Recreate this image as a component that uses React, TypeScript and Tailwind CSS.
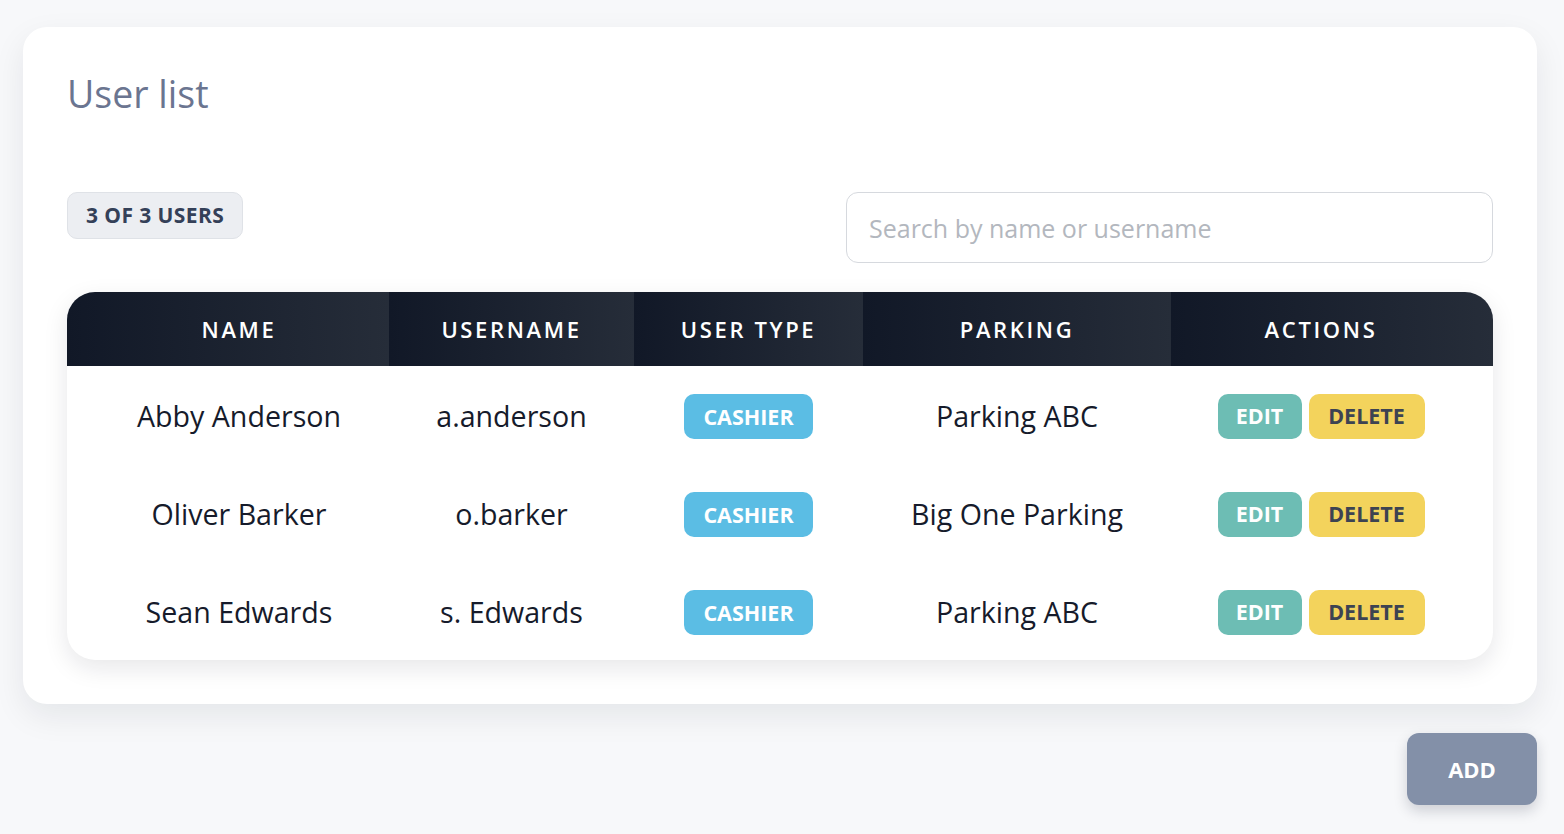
const users = [
  { name: "Abby Anderson", username: "a.anderson", type: "CASHIER", parking: "Parking ABC" },
  { name: "Oliver Barker", username: "o.barker", type: "CASHIER", parking: "Big One Parking" },
  { name: "Sean Edwards", username: "s. Edwards", type: "CASHIER", parking: "Parking ABC" },
];

const columns = [
  { label: "NAME", cls: "w-[322px] pl-[22px]" },
  { label: "USERNAME", cls: "w-[245px]" },
  { label: "USER TYPE", cls: "w-[229px]" },
  { label: "PARKING", cls: "w-[308px]" },
  { label: "ACTIONS", cls: "w-[322px] pr-[22px]" },
];

const App = () => {
  return (
    <div className="min-h-screen bg-[#f7f8fa] pt-[27px] pl-[23px] pr-[27px] pb-6 font-['Open_Sans',sans-serif]">
      {/* Card */}
      <div className="bg-white rounded-[24px] p-11 shadow-[0_12px_32px_rgba(15,23,42,0.08)]">
        <h1 className="text-[37.5px] leading-[46px] text-[#6b7590] font-normal">User list</h1>

        <div className="mt-[75px] flex items-start justify-between">
          <span className="inline-flex items-center h-[47px] px-[18px] rounded-[10px] bg-[#eceef2] border border-[#dfe2e7] text-[21px] font-bold text-[#344058] tracking-[0.02em]">
            3 OF 3 USERS
          </span>
          <input
            type="text"
            placeholder="Search by name or username"
            className="w-[647px] h-[71px] rounded-[12px] border border-[#d6d9de] px-[22px] text-[25px] text-[#111827] placeholder:text-[#b3b7be] outline-none"
          />
        </div>

        {/* Table */}
        <div className="mt-[29px] rounded-[28px] overflow-hidden bg-white shadow-[0_8px_24px_rgba(15,23,42,0.10)]">
          <table className="w-full border-collapse table-fixed">
            <thead>
              <tr className="h-[74px]">
                {columns.map((c) => (
                  <th
                    key={c.label}
                    className={`${c.cls} bg-gradient-to-r from-[#111827] to-[#262d39] text-white text-[22px] font-semibold tracking-[0.12em]`}
                  >
                    {c.label}
                  </th>
                ))}
              </tr>
            </thead>
            <tbody>
              {users.map((u) => (
                <tr key={u.username} className="h-[98px] text-[28.6px] text-[#161b2b]">
                  <td className="text-center pl-[22px] pt-[2px]">{u.name}</td>
                  <td className="text-center pt-[2px]">{u.username}</td>
                  <td className="text-center pt-[2px]">
                    <span className="inline-flex items-center justify-center w-[129px] h-[45px] rounded-[10px] bg-[#5bbde4] text-white text-[21.5px] font-bold">
                      {u.type}
                    </span>
                  </td>
                  <td className="text-center pt-[2px]">{u.parking}</td>
                  <td className="text-center pr-[22px] pt-[2px]">
                    <div className="flex justify-center gap-[7px]">
                      <button className="w-[84px] h-[45px] rounded-[10px] bg-[#6dbdb4] text-white text-[21.5px] font-bold">
                        EDIT
                      </button>
                      <button className="w-[116px] h-[45px] rounded-[10px] bg-[#f3d35c] text-[#3d4352] text-[21.5px] font-bold">
                        DELETE
                      </button>
                    </div>
                  </td>
                </tr>
              ))}
            </tbody>
          </table>
        </div>
      </div>

      <div className="mt-[29px] flex justify-end">
        <button className="w-[130px] h-[72px] rounded-[12px] bg-[#8390a8] text-white text-[22px] font-bold shadow-[0_6px_14px_rgba(15,23,42,0.18)]">
          ADD
        </button>
      </div>
    </div>
  );
};

export default App;
